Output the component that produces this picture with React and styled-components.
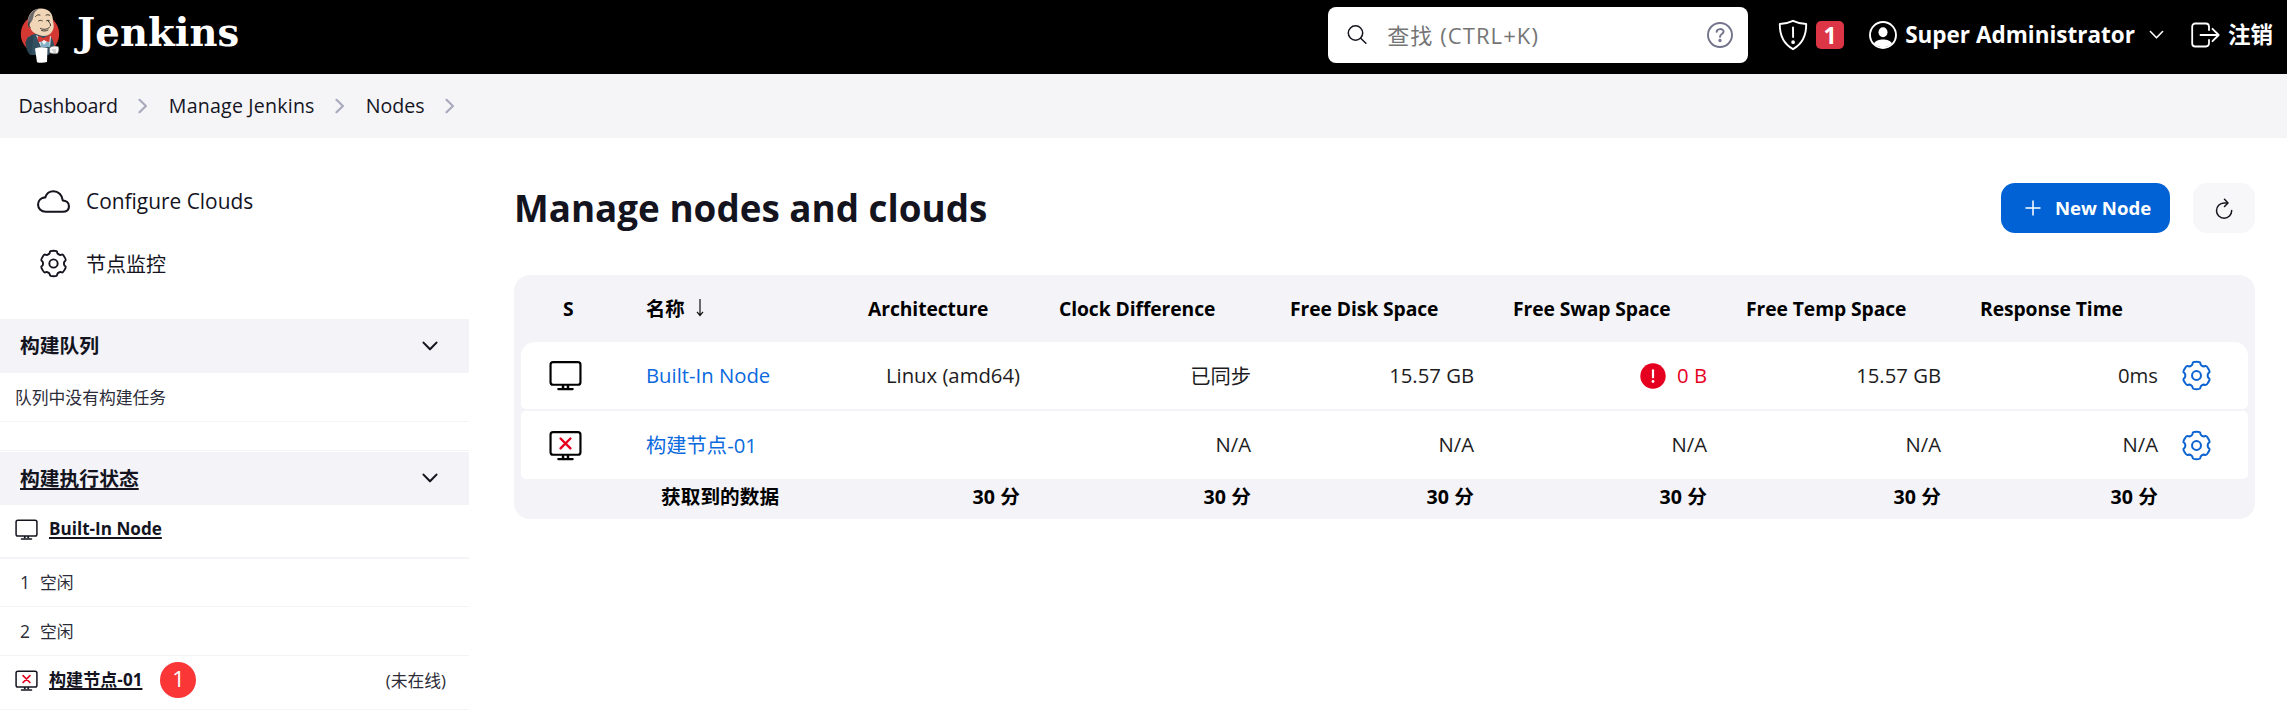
import React from 'react';
import styled, { createGlobalStyle } from 'styled-components';
import { IoCloudOutline } from 'react-icons/io5';

const GlobalStyle = createGlobalStyle`
  * { box-sizing: border-box; }
  body {
    margin: 0;
    background: #fff;
    color: #14141f;
    font-family: "Open Sans", "Noto Sans CJK SC", sans-serif;
  }
`;

/* ---------- Icons ---------- */

const gearPath = (() => {
  const pts = [];
  for (let k = 0; k < 6; k += 1) {
    const lobe = k * 60 - 90;
    [[-25, 11.6], [-19, 12.4], [-15, 14.6], [15, 14.6], [19, 12.4], [25, 11.6]].forEach(([d, r]) => {
      const a = ((lobe + d) * Math.PI) / 180;
      pts.push([16 + r * Math.cos(a), 16 + r * Math.sin(a)]);
    });
  }
  const mid = (p, q) => `${((p[0] + q[0]) / 2).toFixed(2)} ${((p[1] + q[1]) / 2).toFixed(2)}`;
  const n = pts.length;
  return (
    `M${mid(pts[n - 1], pts[0])}` +
    pts.map((p, i) => `Q${p[0].toFixed(2)} ${p[1].toFixed(2)} ${mid(p, pts[(i + 1) % n])}`).join('') +
    'Z'
  );
})();

const GearIcon = ({ size }) => (
  <svg width={size} height={size} viewBox="0 0 32 32" fill="none" stroke="currentColor" strokeWidth="2.1">
    <path d={gearPath} />
    <circle cx="16" cy="16" r="4.6" />
  </svg>
);

const MonitorIcon = ({ size, offline }) => (
  <svg width={size} height={size} viewBox="0 0 32 32" fill="none" stroke="currentColor" strokeWidth="2.1">
    <rect x="1.5" y="3" width="29" height="22" rx="2.5" />
    <path d="M13.6 25v3M18.4 25v3" strokeWidth="2.4" />
    <path d="M9 29.2h14" strokeLinecap="round" />
    {offline && <path d="M11.2 9.2l9.6 9.6M20.8 9.2l-9.6 9.6" stroke="#e6001f" strokeWidth="2.3" strokeLinecap="round" />}
  </svg>
);

const ChevronRight = () => (
  <svg width="10" height="16" viewBox="0 0 10 16" fill="none" stroke="#a9a9bd" strokeWidth="2.2" strokeLinecap="round" strokeLinejoin="round">
    <path d="M1.5 1.8l6.4 6.2-6.4 6.2" />
  </svg>
);

const ChevronDown = ({ width, stroke }) => (
  <svg width={width} height={width * 0.64} viewBox="0 0 16 10" fill="none" stroke="currentColor" strokeWidth={stroke} strokeLinecap="round" strokeLinejoin="round">
    <path d="M1.5 1.5L8 8.2l6.5-6.7" />
  </svg>
);

const SearchIcon = () => (
  <svg width="20" height="20" viewBox="0 0 20 20" fill="none" stroke="#14141f" strokeWidth="1.5" strokeLinecap="round">
    <circle cx="8.5" cy="8" r="7.2" />
    <path d="M13.7 13.2l5.2 5" />
  </svg>
);

const HelpIcon = () => (
  <svg width="26" height="26" viewBox="0 0 26 26" fill="none" stroke="#73738c" strokeWidth="1.9" strokeLinecap="round" strokeLinejoin="round">
    <circle cx="13" cy="13" r="12" />
    <path d="M9.6 9.8c.3-3.6 7-3.6 7-.2 0 2.5-3.6 2.5-3.6 5.3" />
    <circle cx="13" cy="18.5" r=".7" fill="#73738c" />
  </svg>
);

const ShieldIcon = () => (
  <svg width="30" height="32" viewBox="0 0 30 32" fill="none" stroke="#fff" strokeWidth="1.9" strokeLinecap="round" strokeLinejoin="round">
    <path d="M15 1.8c4.2 2 8.8 3 13.2 3.2C28.4 16.5 25 24.5 15 30.2 5 24.5 1.6 16.5 1.8 5 6.2 4.8 10.8 3.8 15 1.8z" />
    <path d="M15 8.5l.1 9.5" />
    <circle cx="15.1" cy="23.2" r=".9" fill="#fff" />
  </svg>
);

const UserIcon = () => (
  <svg width="28" height="28" viewBox="0 0 28 28">
    <circle cx="14" cy="14" r="13" fill="none" stroke="#fff" strokeWidth="1.9" />
    <ellipse cx="14" cy="11.2" rx="4.5" ry="5" fill="#fff" />
    <path d="M5 22.5c2.5-5.3 15.5-5.3 18 0A12.500 12.500 0 0 1 5 22.5z" fill="#fff" />
  </svg>
);

const LogoutIcon = () => (
  <svg width="29" height="26" viewBox="0 0 29 26" fill="none" stroke="#fff" strokeWidth="1.8" strokeLinecap="round" strokeLinejoin="round">
    <path d="M18 8V4.5A3.2 3.2 0 0 0 15 1.500H4.200a3 3 0 0 0-3 3v17a3 3 0 0 0 3 3H15a3.200 3.200 0 0 0 3-3V18" />
    <path d="M9.500 13h18M21.500 6.800l6.200 6.200-6.200 6.200" />
  </svg>
);

const PlusIcon = () => (
  <svg width="16" height="16" viewBox="0 0 16 16" stroke="#fff" strokeWidth="1.5">
    <path d="M8 .5v15M.5 8h15" />
  </svg>
);

const RefreshIcon = () => (
  <svg width="18" height="21" viewBox="0 0 18 21" fill="none" stroke="#14141f" strokeWidth="1.5" strokeLinecap="round" strokeLinejoin="round">
    <path d="M12.5 5H9a7.600 7.600 0 1 0 7.700 7.600" />
    <path d="M9.500 1.300L13 5 9.500 8.500" />
  </svg>
);

const AlertIcon = () => (
  <svg width="26" height="26" viewBox="0 0 26 26">
    <circle cx="13" cy="13" r="12.7" fill="#e6001f" />
    <path d="M13 7.3v7" stroke="#fff" strokeWidth="2.2" strokeLinecap="round" />
    <circle cx="13" cy="18.5" r="1.4" fill="#fff" />
  </svg>
);

const SortArrow = () => (
  <svg width="8" height="18" viewBox="0 0 8 18" fill="none" stroke="#111" strokeWidth="1.2">
    <path d="M4 0v16M1 12.800l3 3.700 3-3.700" />
  </svg>
);

const ButlerLogo = () => (
  <svg width="40" height="57" viewBox="0 0 40 57">
    <ellipse cx="20" cy="27" rx="19.2" ry="19.5" fill="#d33833" />
    <path d="M7 31c4-3 8-4.500 12-5l11 3c3 3 4.500 8 4.500 14l-6 5H10c-2-5-4-12-3-17z" fill="#335061" />
    <path d="M5.500 35c1.500-4 5-6 8-7l-2 20c-3-1-5-3-6-13z" fill="#2b4453" />
    <path d="M16 28l7 4 8-3-1 11h-9z" fill="#f1f1f1" />
    <path d="M20 32l4 6 5-6 1 8h-9z" fill="#81b0c4" />
    <path d="M17.500 29.500c2-1 4.500.3 6 1.800 1.500-1.600 4-2.800 6.500-2l-.5 5.500c-2 .3-4.200-.6-5.500-2-1.500 1.600-3.500 2.600-6 2.200z" fill="#d33833" />
    <path d="M8 17C7 7 13 1.500 21 1.500c8 0 12 5 12 13 1.500 5 .5 9-2 11.500-3 3.500-8 3.500-12 2-5-1.500-8-4-9-8-1-1-2-1.500-2-3z" fill="#f0d6b7" />
    <path d="M8.200 21C6.500 11 10 3 20 1.300c-4 1.700-6 4.400-6.500 7.700-.5 2.800-1 5-3 6.500-1 2-.5 4-2.300 5.500z" fill="#6d6b6d" />
    <path d="M15.500 9.500c1.300-1.500 2.800-2 4.500-1.500M26 8.200c1.300-.8 2.600-.7 3.800.2M18.500 14c1-.9 2.500-1 3.800-.2M26.500 13.800c1-.8 2-.8 3 0M28 14c2 2 3 3.500 2.500 4.800M20.500 21.500c3.500 1.500 6.500 1 9-1.200M21.500 23.500c3 .8 4.500.6 6.500-.5M10 15c-2 1-2 4 .3 5.500" fill="none" stroke="#2b2525" strokeWidth=".9" strokeLinecap="round" />
    <path d="M15 41.500c4-1.500 8-1.500 12.500-.5L27 55c-3.500 1-7 1-10 .2z" fill="#fff" />
    <path d="M29.500 41c2-2 6.500-2.500 9-1.200.7 2.700.4 5-1 6.700-3 .5-6 .3-8-1z" fill="#f5f5f5" stroke="#555" strokeWidth=".5" />
    <path d="M32 43h4M33 45h3" stroke="#888" strokeWidth=".6" />
  </svg>
);

/* ---------- Header ---------- */

const Header = styled.header`
  display: flex;
  align-items: center;
  height: 74px;
  padding: 0 14px 4px 20px;
  background: #000;
  color: #fff;
`;

const Brand = styled.div`
  display: flex;
  align-items: center;
  gap: 17px;
  margin-right: auto;
  font: 700 38.5px/48px "DejaVu Serif", serif;
  letter-spacing: 0.1px;
`;

const BrandName = styled.span`
  margin-top: -5px;
`;

const SearchBox = styled.div`
  display: flex;
  align-items: center;
  width: 420px;
  height: 56px;
  margin-right: 30px;
  padding: 0 15px 0 19px;
  border-radius: 8px;
  background: #fff;
`;

const Placeholder = styled.span`
  flex: 1;
  margin-left: 20px;
  color: #757575;
  font-size: 22px;
  letter-spacing: 1.1px;
  line-height: 30px;
`;

const Badge = styled.span`
  display: flex;
  align-items: center;
  justify-content: center;
  width: 28px;
  height: 28px;
  margin: 0 25px 0 8px;
  border-radius: 5px;
  background: #dc3545;
  font-size: 23px;
  font-weight: 700;
  line-height: 28px;
`;

const HeaderLink = styled.a`
  display: flex;
  align-items: center;
  gap: 8px;
  margin-right: ${(p) => p.$after || 0}px;
  font-size: 22.5px;
  font-weight: 700;
  line-height: 30px;
  white-space: nowrap;
`;

const Caret = styled.span`
  display: flex;
  margin-left: 6px;
`;

const Breadcrumbs = styled.nav`
  display: flex;
  align-items: center;
  gap: 20.500px;
  height: 64px;
  padding-left: 18.500px;
  background: #f5f5f8;
  font-size: 19.600px;
  line-height: 28px;
`;

const Crumb = styled.a`
  letter-spacing: ${(p) => p.$spacing}px;
`;

/* ---------- Sidebar ---------- */

const Body = styled.div`
  display: flex;
  align-items: flex-start;
`;

const Sidebar = styled.aside`
  width: 469px;
  padding-top: 32px;
`;

const Task = styled.a`
  display: flex;
  align-items: center;
  gap: 16px;
  height: 62.5px;
  padding-left: 37px;
  font-size: ${(p) => p.$size || 20.9}px;
`;

const TaskIcon = styled.span`
  display: flex;
  justify-content: center;
  width: 33px;
`;

const Pane = styled.section`
  margin-top: ${(p) => p.$top}px;
  border-top: ${(p) => (p.$ruled ? '1px solid #f3f3f8' : 'none')};
  padding-top: ${(p) => (p.$ruled ? 1 : 0)}px;
`;

const PaneHeader = styled.div`
  display: flex;
  align-items: center;
  justify-content: space-between;
  height: ${(p) => p.$height}px;
  padding: 0 31px 0 20px;
  background: #f3f3f8;
  font-size: 19.8px;
  font-weight: 700;
`;

const PaneTitle = styled.span`
  line-height: 28px;
  text-decoration: ${(p) => (p.$link ? 'underline' : 'none')};
  text-decoration-thickness: 1.5px;
  text-underline-offset: 2px;
`;

const PaneRow = styled.div`
  display: flex;
  align-items: center;
  height: ${(p) => p.$height}px;
  padding: 0 23px ${(p) => p.$lift || 0}px ${(p) => p.$indent || 15}px;
  border-bottom: ${(p) => p.$rule || 1}px solid #f3f3f8;
  color: #2c2c38;
  font-size: 16.8px;
`;

const NodeLink = styled.a`
  margin-left: 11px;
  color: #14141f;
  font-size: 17.1px;
  font-weight: 700;
  line-height: 24px;
  text-decoration: underline;
  text-decoration-thickness: 1.5px;
  text-underline-offset: 2px;
`;

const ExecutorNumber = styled.span`
  width: 20px;
  font-size: 17.5px;
`;

const NodeRowIcon = styled.span`
  display: flex;
  color: #14141f;
`;

const Marker = styled.span`
  display: flex;
  justify-content: center;
  width: 36px;
  height: 36px;
  margin-left: 18px;
  border-radius: 50%;
  background: #fa3636;
  color: #fff;
  font-size: 22px;
  line-height: 33px;
`;

const Status = styled.span`
  margin-left: auto;
`;

/* ---------- Main ---------- */

const Main = styled.main`
  flex: 1;
  padding: 45px 32px 0 45px;
`;

const TitleBar = styled.div`
  display: flex;
  align-items: center;
  height: 50px;
  margin-bottom: 42px;
`;

const Title = styled.h1`
  margin: 0 auto 0 0;
  font-size: 36.8px;
  font-weight: 700;
  line-height: 50px;
`;

const PrimaryButton = styled.button`
  display: flex;
  align-items: center;
  gap: 14px;
  width: 169px;
  height: 50px;
  margin-right: 23px;
  padding: 0 0 0 24px;
  border: 0;
  border-radius: 14px;
  background: #0062d4;
  color: #fff;
  font: 700 18.600px/28px "Open Sans", sans-serif;
  white-space: nowrap;
`;

const ButtonLabel = styled.span`
  padding-bottom: 1px;
`;

const IconButton = styled.button`
  display: flex;
  align-items: center;
  justify-content: center;
  width: 62px;
  height: 50px;
  padding: 0;
  border: 0;
  border-radius: 14px;
  background: #f7f7fa;
`;

const Table = styled.div`
  padding: 0 7px;
  border-radius: 16px;
  background: #f3f3f8;
  color: #000;
`;

const Row = styled.div`
  display: grid;
  grid-template-columns: 125px 222px 191px 231px 223px 233px 234px 202px 1fr;
  align-items: center;
  white-space: nowrap;
`;

const HeadRow = styled(Row)`
  height: 67px;
  padding-bottom: 1px;
  font-size: 19.3px;
  font-weight: 700;
  letter-spacing: -0.08px;
`;

const BodyRow = styled(Row)`
  height: ${(p) => p.$height}px;
  margin-bottom: ${(p) => p.$gap || 0}px;
  border-radius: ${(p) => p.$radius};
  background: #fff;
  color: #1c1c22;
  font-size: 20.3px;
`;

const FootRow = styled(Row)`
  height: 40px;
  padding-bottom: 7px;
  font-size: 19.6px;
  font-weight: 700;
  letter-spacing: 0.1px;
`;

const StatusCell = styled.div`
  display: flex;
  padding-left: ${(p) => p.$left}px;
  color: #000;
`;

const NameCell = styled.div`
  display: flex;
  align-items: center;
  gap: 12px;
  padding-left: ${(p) => p.$left || 0}px;
`;

const NameLink = styled.a`
  padding-bottom: 2px;
  color: #0b6add;
`;

const ValueCell = styled.div`
  display: flex;
  align-items: center;
  justify-content: flex-end;
  gap: 11px;
  padding-right: ${(p) => (p.$last ? 24 : 39)}px;
  color: ${(p) => (p.$alert ? '#e6001f' : 'inherit')};
`;

const Value = styled.span`
  padding-bottom: 2px;
`;

const ActionCell = styled.a`
  display: flex;
  margin-left: -1px;
  color: #0b63d1;
`;

const columns = ['Architecture', 'Clock Difference', 'Free Disk Space', 'Free Swap Space', 'Free Temp Space', 'Response Time'];

const nodes = [
  {
    name: 'Built-In Node',
    values: ['Linux (amd64)', '已同步', '15.57 GB', '0 B', '15.57 GB', '0ms'],
    alert: 3,
    height: 67,
    gap: 2,
    radius: '14px 14px 5px 5px',
  },
  {
    name: '构建节点-01',
    offline: true,
    values: ['', 'N/A', 'N/A', 'N/A', 'N/A', 'N/A'],
    height: 68,
    radius: '5px',
  },
];

const crumbs = [
  { label: 'Dashboard', spacing: -0.2 },
  { label: 'Manage Jenkins', spacing: 0.2 },
  { label: 'Nodes', spacing: 0 },
];

export default function App() {
  return (
    <>
      <GlobalStyle />
      <Header>
        <Brand>
          <ButlerLogo />
          <BrandName>Jenkins</BrandName>
        </Brand>
        <SearchBox>
          <SearchIcon />
          <Placeholder>查找 (CTRL+K)</Placeholder>
          <HelpIcon />
        </SearchBox>
        <ShieldIcon />
        <Badge>1</Badge>
        <HeaderLink $after={27}>
          <UserIcon />
          Super Administrator
          <Caret><ChevronDown width={15} stroke={1.7} /></Caret>
        </HeaderLink>
        <HeaderLink>
          <LogoutIcon />
          注销
        </HeaderLink>
      </Header>

      <Breadcrumbs>
        {crumbs.map((crumb) => (
          <React.Fragment key={crumb.label}>
            <Crumb $spacing={crumb.spacing}>{crumb.label}</Crumb>
            <ChevronRight />
          </React.Fragment>
        ))}
      </Breadcrumbs>

      <Body>
        <Sidebar>
          <Task>
            <TaskIcon><IoCloudOutline size={33} /></TaskIcon>
            Configure Clouds
          </Task>
          <Task $size={20}>
            <TaskIcon><GearIcon size={29} /></TaskIcon>
            节点监控
          </Task>

          <Pane $top={24}>
            <PaneHeader $height={54}>
              <PaneTitle>构建队列</PaneTitle>
              <ChevronDown width={16} stroke={2.1} />
            </PaneHeader>
            <PaneRow $height={49} $lift={1}>队列中没有构建任务</PaneRow>
          </Pane>

          <Pane $top={28} $ruled>
            <PaneHeader $height={53}>
              <PaneTitle $link>构建执行状态</PaneTitle>
              <ChevronDown width={16} stroke={2.1} />
            </PaneHeader>
            <PaneRow $height={54} $rule={2} $lift={4}>
              <NodeRowIcon><MonitorIcon size={23} /></NodeRowIcon>
              <NodeLink>Built-In Node</NodeLink>
            </PaneRow>
            <PaneRow $height={48} $indent={20} $lift={1}>
              <ExecutorNumber>1</ExecutorNumber>空闲
            </PaneRow>
            <PaneRow $height={49} $indent={20}>
              <ExecutorNumber>2</ExecutorNumber>空闲
            </PaneRow>
            <PaneRow $height={54} $lift={5}>
              <NodeRowIcon><MonitorIcon size={23} offline /></NodeRowIcon>
              <NodeLink>构建节点-01</NodeLink>
              <Marker>1</Marker>
              <Status>(未在线)</Status>
            </PaneRow>
          </Pane>
        </Sidebar>

        <Main>
          <TitleBar>
            <Title>Manage nodes and clouds</Title>
            <PrimaryButton><PlusIcon /><ButtonLabel>New Node</ButtonLabel></PrimaryButton>
            <IconButton aria-label="Refresh"><RefreshIcon /></IconButton>
          </TitleBar>

          <Table>
            <HeadRow>
              <StatusCell $left={42}>S</StatusCell>
              <NameCell>名称 <SortArrow /></NameCell>
              {columns.map((column) => <div key={column}>{column}</div>)}
            </HeadRow>
            {nodes.map((node) => (
              <BodyRow key={node.name} $height={node.height} $gap={node.gap} $radius={node.radius}>
                <StatusCell $left={28}><MonitorIcon size={33} offline={node.offline} /></StatusCell>
                <NameCell><NameLink>{node.name}</NameLink></NameCell>
                {node.values.map((value, i) => (
                  <ValueCell key={columns[i]} $alert={node.alert === i} $last={i === 5}>
                    {node.alert === i && <AlertIcon />}
                    <Value>{value}</Value>
                  </ValueCell>
                ))}
                <ActionCell><GearIcon size={31} /></ActionCell>
              </BodyRow>
            ))}
            <FootRow>
              <span />
              <NameCell $left={15}>获取到的数据</NameCell>
              {columns.map((column, i) => (
                <ValueCell key={column} $last={i === 5}>30 分</ValueCell>
              ))}
            </FootRow>
          </Table>
        </Main>
      </Body>
    </>
  );
}
